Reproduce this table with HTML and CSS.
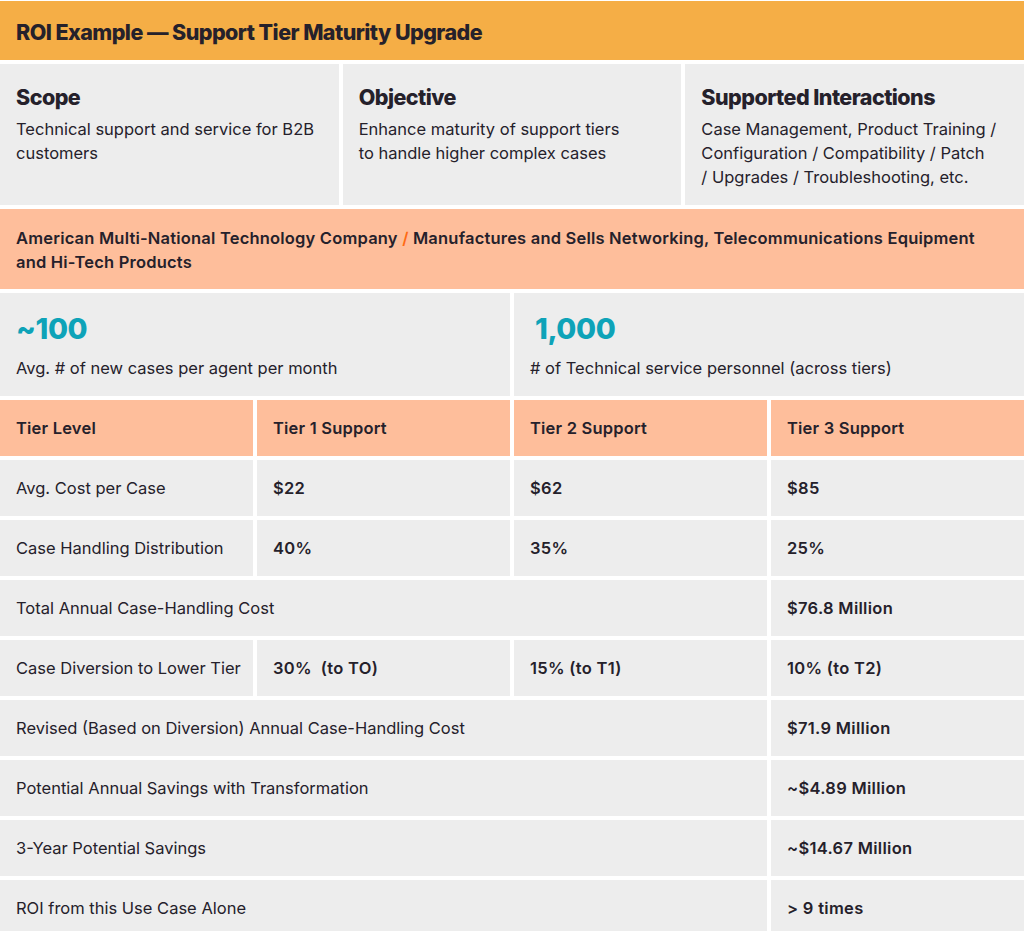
FILE: index.html
```html
<!DOCTYPE html>
<html lang="en">
<head>
<meta charset="utf-8">
<title>ROI Example — Support Tier Maturity Upgrade</title>
<link rel="stylesheet" href="styles.css">
</head>
<body>
<div class="sheet">
  <div class="title">ROI Example — Support Tier Maturity Upgrade</div>

  <div class="intro">
    <div class="intro-cell">
      <div class="intro-head">Scope</div>
      <div class="intro-text">Technical support and service for B2B customers</div>
    </div>
    <div class="intro-cell">
      <div class="intro-head">Objective</div>
      <div class="intro-text">Enhance maturity of support tiers to&nbsp;handle higher complex cases</div>
    </div>
    <div class="intro-cell">
      <div class="intro-head">Supported Interactions</div>
      <div class="intro-text">Case Management, Product Training / Configuration / Compatibility / Patch /&nbsp;Upgrades / Troubleshooting, etc.</div>
    </div>
  </div>

  <div class="company">American Multi-National Technology Company <span class="slash">/</span> Manufactures and Sells Networking, Telecommunications Equipment and Hi-Tech Products</div>

  <div class="stats">
    <div class="stat">
      <div class="stat-num">~100</div>
      <div class="stat-label">Avg. # of new cases per agent per month</div>
    </div>
    <div class="stat">
      <div class="stat-num indent">1,000</div>
      <div class="stat-label"># of Technical service personnel (across tiers)</div>
    </div>
  </div>

  <div class="tiers">
    <div class="cell head">Tier Level</div>
    <div class="cell head">Tier 1 Support</div>
    <div class="cell head">Tier 2 Support</div>
    <div class="cell head">Tier 3 Support</div>

    <div class="cell">Avg. Cost per Case</div>
    <div class="cell val">$22</div>
    <div class="cell val">$62</div>
    <div class="cell val">$85</div>

    <div class="cell">Case Handling Distribution</div>
    <div class="cell val">40%</div>
    <div class="cell val">35%</div>
    <div class="cell val">25%</div>

    <div class="cell span3">Total Annual Case-Handling Cost</div>
    <div class="cell val">$76.8 Million</div>

    <div class="cell">Case Diversion to Lower Tier</div>
    <div class="cell val">30%&nbsp; (to TO)</div>
    <div class="cell val">15% (to T1)</div>
    <div class="cell val">10% (to T2)</div>

    <div class="cell span3">Revised (Based on Diversion) Annual Case-Handling Cost</div>
    <div class="cell val">$71.9 Million</div>

    <div class="cell span3">Potential Annual Savings with Transformation</div>
    <div class="cell val">~$4.89 Million</div>

    <div class="cell span3">3-Year Potential Savings</div>
    <div class="cell val">~$14.67 Million</div>

    <div class="cell span3">ROI from this Use Case Alone</div>
    <div class="cell val">&gt; 9 times</div>
  </div>
</div>
</body>
</html>
```

FILE: styles.css
```css
* { box-sizing: border-box; }

html, body {
  margin: 0;
  padding: 0;
  background: #ffffff;
}

body {
  font-family: "Inter", "Liberation Sans", sans-serif;
  color: #25212b;
  font-size: 16.5px;
}

.sheet {
  display: flex;
  flex-direction: column;
  gap: 4px;
  width: 1024px;
  padding-top: 1px;
}

.title {
  height: 59px;
  background: #f5ae46;
  display: flex;
  align-items: center;
  padding: 3px 16px 0;
  font-size: 21.5px;
  font-weight: 800;
  letter-spacing: -0.55px;
}

.intro {
  display: grid;
  grid-template-columns: repeat(3, minmax(0, 1fr));
  gap: 4px;
}

.intro-cell {
  background: #ededed;
  padding: 20px 16px 16px;
}

.intro-head {
  font-size: 21.5px;
  font-weight: 800;
  line-height: 26px;
  letter-spacing: -0.55px;
  margin-bottom: 7px;
}

.intro-text {
  line-height: 24px;
}

.company {
  background: #febe9b;
  padding: 17px 16px 15px;
  font-weight: 600;
  line-height: 24px;
  letter-spacing: 0.2px;
}

.slash { color: #ff6a14; }

.stats {
  display: grid;
  grid-template-columns: repeat(2, minmax(0, 1fr));
  gap: 4px;
}

.stat {
  background: #ededed;
  padding: 19px 16px 16px;
}

.stat-num {
  color: #0ea3b8;
  font-size: 29px;
  font-weight: 800;
  line-height: 34px;
  letter-spacing: -0.4px;
  margin-bottom: 10px;
}

.stat-num.indent { margin-left: 5px; }

.stat-label {
  line-height: 24px;
}

.tiers {
  display: grid;
  grid-template-columns: repeat(4, minmax(0, 1fr));
  grid-auto-rows: 56px;
  gap: 4px;
}

.cell {
  background: #ededed;
  display: flex;
  align-items: center;
  padding: 0 12px 0 16px;
  white-space: nowrap;
}

.cell.head {
  background: #febe9b;
  font-weight: 600;
  letter-spacing: 0.2px;
}

.cell.val {
  font-weight: 600;
  letter-spacing: 0.3px;
}

.cell.span3 { grid-column: span 3; }
```
